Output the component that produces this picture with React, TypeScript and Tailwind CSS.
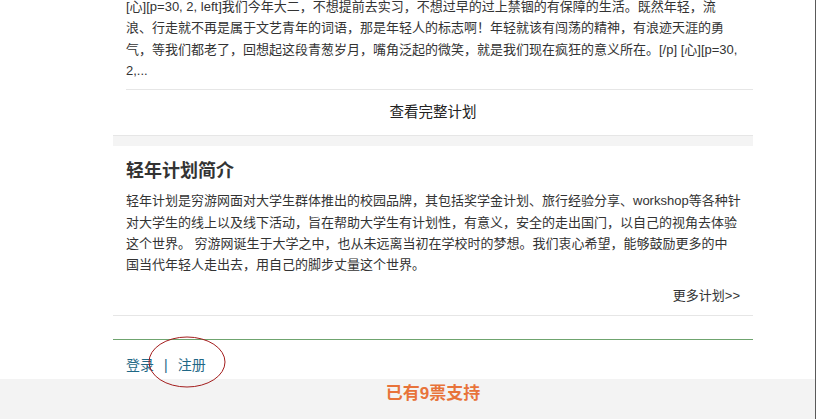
import React from "react";

const FONT = "font-['Liberation_Sans','Noto_Sans_CJK_SC',sans-serif]";

const excerpt = [
  "[心][p=30, 2, left]我们今年大二，不想提前去实习，不想过早的过上禁锢的有保障的生活。既然年轻，流",
  "浪、行走就不再是属于文艺青年的词语，那是年轻人的标志啊！年轻就该有闯荡的精神，有浪迹天涯的勇",
  "气，等我们都老了，回想起这段青葱岁月，嘴角泛起的微笑，就是我们现在疯狂的意义所在。[/p] [心][p=30,",
  "2,...",
];

const intro = [
  "轻年计划是穷游网面对大学生群体推出的校园品牌，其包括奖学金计划、旅行经验分享、workshop等各种针",
  "对大学生的线上以及线下活动，旨在帮助大学生有计划性，有意义，安全的走出国门，以自己的视角去体验",
  "这个世界。 穷游网诞生于大学之中，也从未远离当初在学校时的梦想。我们衷心希望，能够鼓励更多的中",
  "国当代年轻人走出去，用自己的脚步丈量这个世界。",
];

export default function App() {
  return (
    <div className={`relative flex h-[419px] w-[820px] overflow-hidden bg-white ${FONT}`}>
      <div className="flex w-[815px] flex-col">
        <div className="h-[379px] overflow-hidden pl-[113px]">
          <div className="w-[640px]">
            {/* Plan excerpt */}
            <div className="-mt-[4px] whitespace-nowrap px-[13px] text-[13px] leading-[21.33px] text-[#333]">
              {excerpt.map((line) => (
                <div key={line}>{line}</div>
              ))}
            </div>
            <div className="ml-[13px] mt-[8px] border-t border-[#e6e6e6]" />
            <div className="flex h-[45px] items-center justify-center text-[14.5px] text-[#222]">
              查看完整计划
            </div>
            <div className="h-[11px] border-t border-[#e6e6e6] bg-[#f4f4f4]" />

            {/* Intro */}
            <div className="px-[13px]">
              <h2 className="mt-[13px] text-[18px] font-bold leading-[24px] text-[#333]">轻年计划简介</h2>
              <div className="mt-[7px] whitespace-nowrap text-[13px] leading-[21.33px] text-[#333]">
                {intro.map((line) => (
                  <div key={line}>{line}</div>
                ))}
              </div>
              <div className="mt-[9px] text-right text-[13px] leading-[21px] text-[#333]">更多计划&gt;&gt;</div>
            </div>
            <div className="mt-[9px] border-t border-[#e6e6e6]" />
            <div className="mt-[23px] border-t border-[#6fa46f]" />

            <div className="mt-[15px] flex items-center px-[13px] text-[14px] leading-[20px] text-[#1f6886]">
              <span>登录</span>
              <span className="mx-[10px]">|</span>
              <span>注册</span>
            </div>
          </div>
        </div>
        <div className="h-[40px] bg-[#f3f3f3] pl-[113px]">
          <div className="w-[640px] pt-[3px] text-center text-[17px] font-bold leading-[24px] text-[#e8733a]">
            已有9票支持
          </div>
        </div>
      </div>
      <div className="w-px bg-[#5a5a5a]" />
      <div className="flex-1 bg-white" />

      {/* Hand-drawn annotation ellipse */}
      <svg className="absolute left-[148px] top-[336px]" width="78" height="52" viewBox="0 0 78 52">
        <ellipse cx="39" cy="26" rx="38" ry="25" fill="none" stroke="#a31d1d" strokeWidth="1" />
      </svg>
    </div>
  );
}
